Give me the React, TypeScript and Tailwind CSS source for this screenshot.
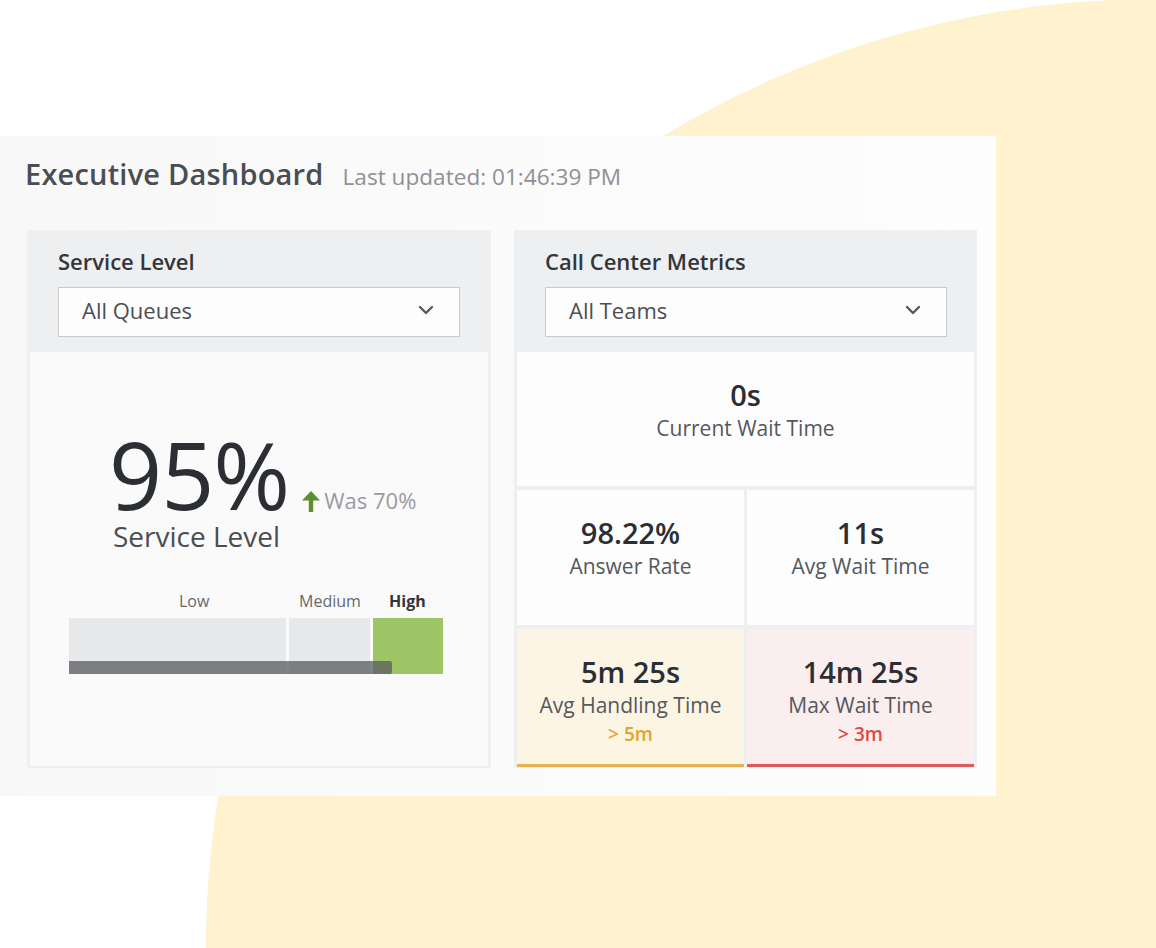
import React from 'react'

const font = { fontFamily: '"Open Sans", "Noto Sans", sans-serif' }

const Chevron = () => (
  <svg width="16" height="10" viewBox="0 0 16 10" fill="none">
    <path d="M2 2l6 6 6-6" stroke="#555a60" strokeWidth="2.4" strokeLinecap="round" strokeLinejoin="round" />
  </svg>
)

const UpArrow = () => (
  <svg width="18" height="21" viewBox="0 0 18 21">
    <path d="M9 0L18 9.5H11.2V21H6.8V9.5H0Z" fill="#5e8f2c" />
  </svg>
)

const Select = ({ label }: { label: string }) => (
  <div className="flex h-[50px] w-[402px] items-center justify-between border border-[#c9cacc] bg-[#fdfdfd] pb-[3px] pl-[23px] pr-[25px]">
    <span className="text-[22px] leading-[28px] text-[#4b4e53]">{label}</span>
    <Chevron />
  </div>
)

const PanelHeader = ({ title, select }: { title: string; select: string }) => (
  <div className="flex h-[122px] flex-col pl-[31px] pt-[16px]">
    <div className="mb-[11px] text-[22px] font-semibold leading-[30px] text-[#33363a]">{title}</div>
    <Select label={select} />
  </div>
)

type Cell = {
  value: string
  label: string
  note?: string
  tone?: 'warn' | 'bad'
}

const Metric = ({ c, className }: { c: Cell; className: string }) => {
  let bg = 'bg-[#fdfdfd]'
  let noteColor = ''
  if (c.tone === 'warn') {
    bg = 'bg-[#fdf5e4] border-b-[3px] border-[#e4b24e]'
    noteColor = 'text-[#e2a32f]'
  }
  if (c.tone === 'bad') {
    bg = 'bg-[#fbeeee] border-b-[3px] border-[#de5b5b]'
    noteColor = 'text-[#dc4a43]'
  }
  return (
    <div className={`flex flex-col items-center pt-[25px] ${bg} ${className}`}>
      <div className="text-[29px] font-semibold leading-[36px] text-[#2b2e33]">{c.value}</div>
      <div className="text-[21px] leading-[30px] text-[#55585d]">{c.label}</div>
      {c.note && <div className={`text-[19px] font-semibold leading-[28px] ${noteColor}`}>{c.note}</div>}
    </div>
  )
}

export default function App() {
  return (
    <div className="relative h-[948px] w-[1156px] overflow-hidden bg-white" style={font}>
      <div className="absolute left-[206px] top-[-1px] h-[1896px] w-[1896px] rounded-full bg-[#fef3ce]" />

      <div className="relative mt-[136px] w-[996px] bg-gradient-to-r from-[#f8f8f8] to-[#fdfdfd] pb-[28px]">
        <div className="flex items-baseline px-[25px] pt-[21px]">
          <h1 className="text-[29px] font-semibold leading-[34px] tracking-[0.2px] text-[#4a4d52]">Executive Dashboard</h1>
          <span className="ml-[19px] text-[22.6px] text-[#8e9094]">Last updated: 01:46:39 PM</span>
        </div>

        <div className="mt-[36px] flex gap-[23px] pl-[27px]">
          {/* service level */}
          <div className="flex h-[538px] w-[464px] flex-col bg-[#eeeff0]">
            <PanelHeader title="Service Level" select="All Queues" />
            <div className="mx-[3px] mb-[2px] flex flex-1 flex-col bg-[#fafafa] pl-[79px] pt-[82px]">
              <div className="flex items-end">
                <span className="text-[93px] leading-[80px] tracking-[-1px] text-[#2b2e33]">95%</span>
                <span className="mb-[2px] ml-[13px] flex items-end">
                  <UpArrow />
                  <span className="ml-[4px] text-[22px] leading-[24px] text-[#9a9b9e]">Was 70%</span>
                </span>
              </div>
              <div className="mt-[5px] pl-[4px] text-[28px] leading-[34px] text-[#4a4d52]">Service Level</div>

              <div className="-ml-[40px] mt-[36px] w-[374px]">
                <div className="flex text-[16px] leading-[24px] text-[#66686c]">
                  <span className="w-[217px] pl-[110px]">Low</span>
                  <span className="w-[84px] pl-[13px]">Medium</span>
                  <span className="pl-[19px] font-bold text-[#333539]">High</span>
                </div>
                <div className="relative mt-[5px] flex h-[56px] gap-[3px]">
                  <div className="w-[217px] bg-[#e7e8e9]" />
                  <div className="w-[81px] bg-[#e7e8e9]" />
                  <div className="w-[70px] bg-[#9dc566]" />
                  <div className="absolute bottom-0 left-0 h-[13px] w-[323px] rounded-r-[2px] bg-[#5a5b5d]/75" />
                </div>
              </div>
            </div>
          </div>

          {/* call center metrics */}
          <div className="flex h-[538px] w-[463px] flex-col bg-[#eeeff0]">
            <PanelHeader title="Call Center Metrics" select="All Teams" />
            <div className="mx-[3px] grid flex-1 grid-cols-2 grid-rows-[134px_135px_138px] gap-x-[3px] gap-y-[4px]">
              <Metric c={{ value: '0s', label: 'Current Wait Time' }} className="col-span-2" />
              <Metric c={{ value: '98.22%', label: 'Answer Rate' }} className="" />
              <Metric c={{ value: '11s', label: 'Avg Wait Time' }} className="" />
              <Metric c={{ value: '5m 25s', label: 'Avg Handling Time', note: '> 5m', tone: 'warn' }} className="" />
              <Metric c={{ value: '14m 25s', label: 'Max Wait Time', note: '> 3m', tone: 'bad' }} className="" />
            </div>
          </div>
        </div>
      </div>
    </div>
  )
}
